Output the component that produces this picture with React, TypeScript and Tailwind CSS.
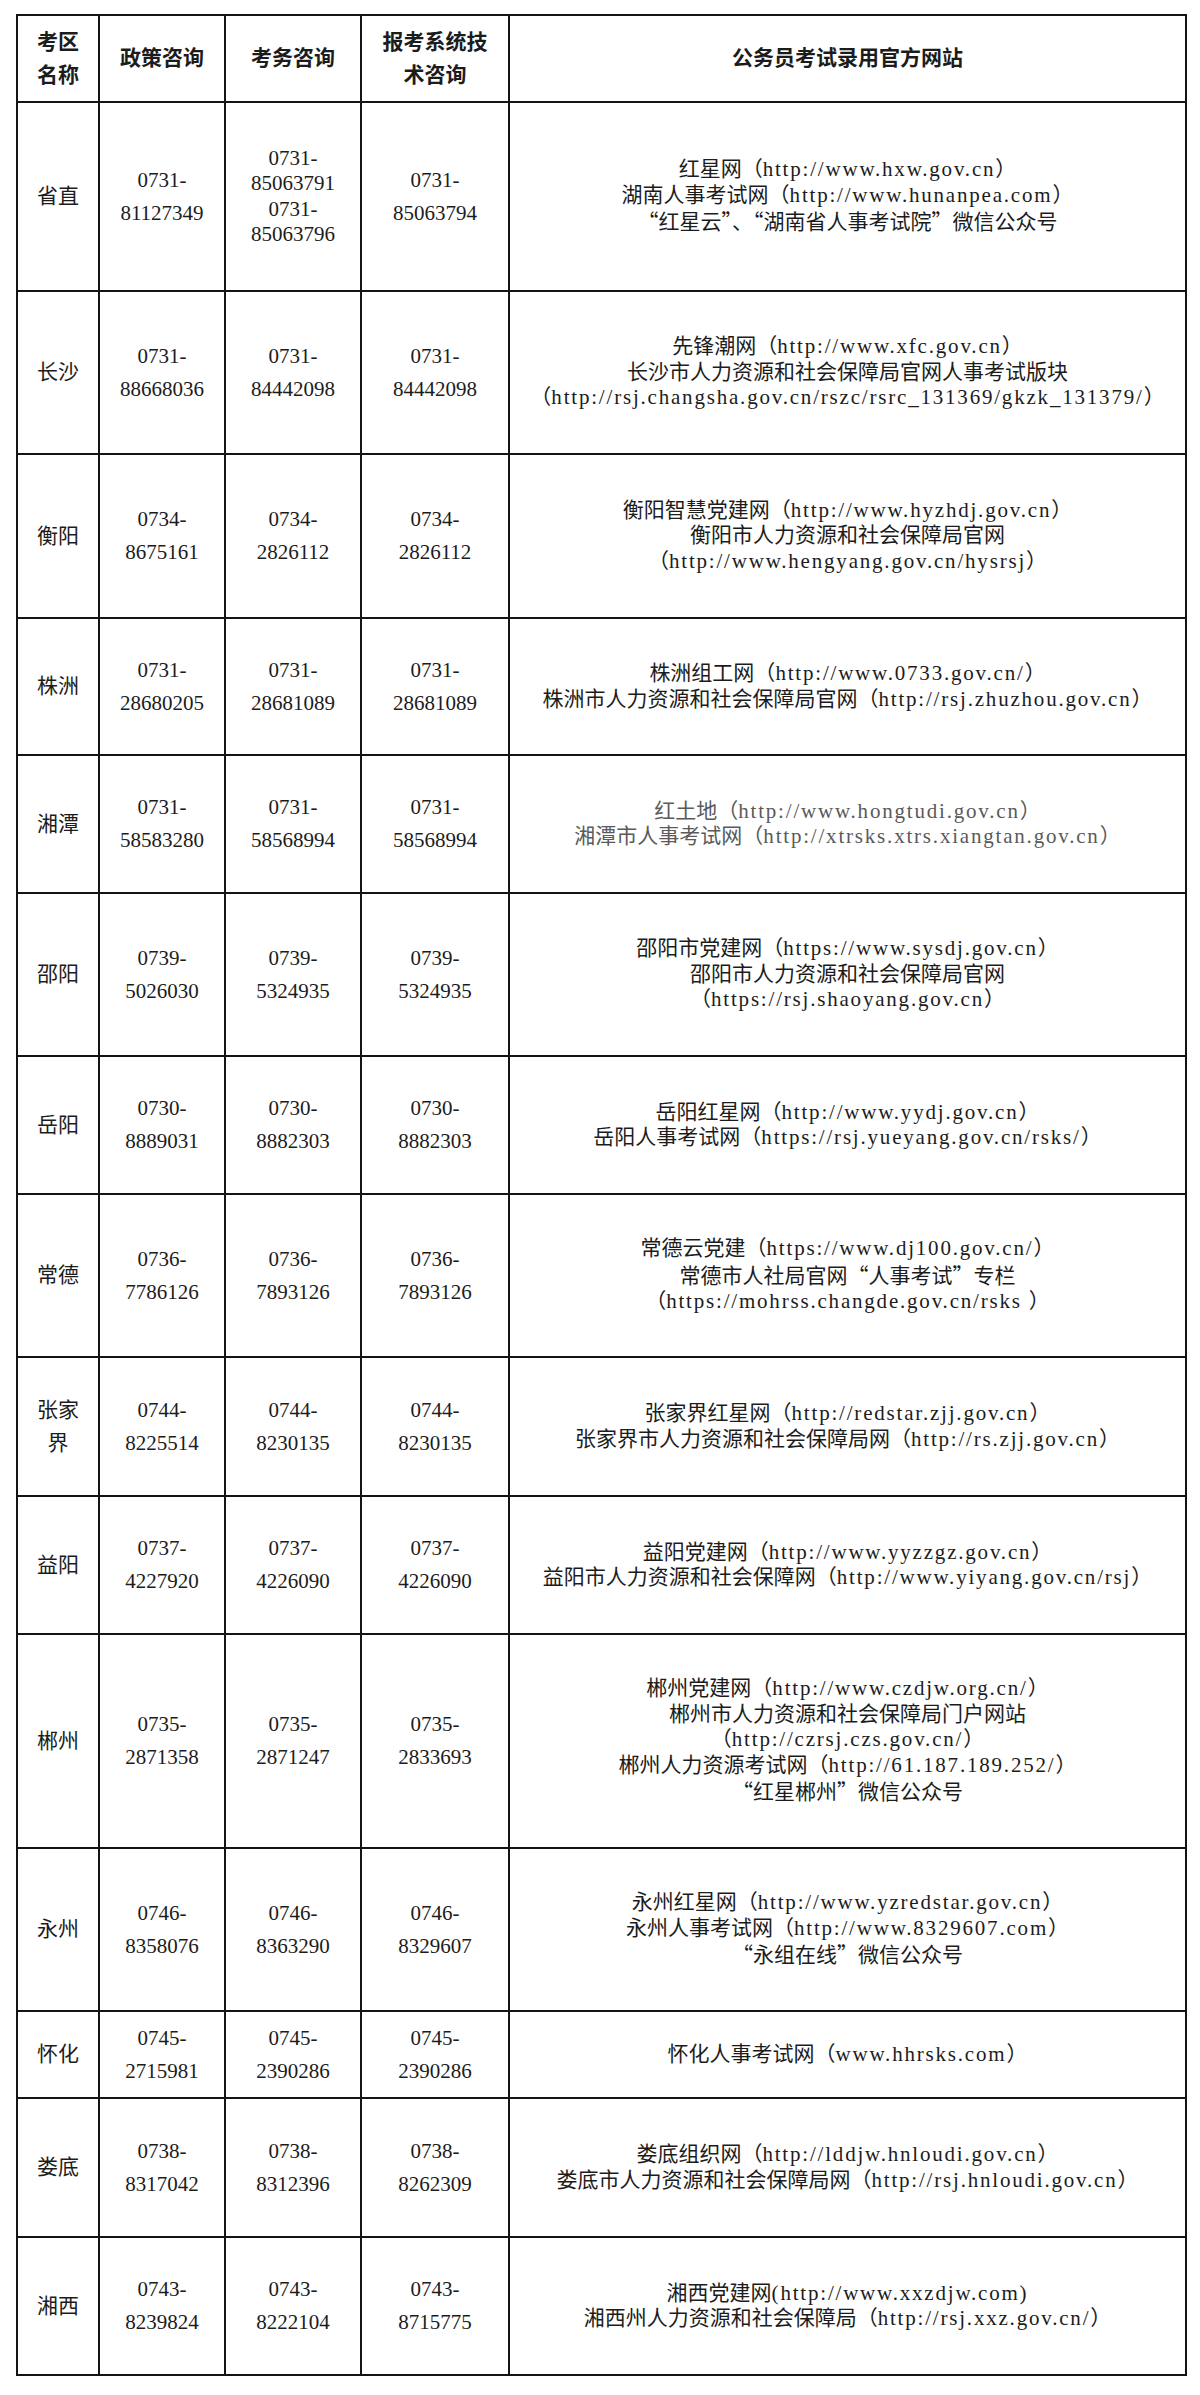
import React from "react";

type Row = {
  name: string[];
  a: string[];
  b: string[];
  c: string[];
  site: string[];
  gray?: boolean;
};

const rows: Row[] = [
  {
    name: ["省直"],
    a: ["0731-", "81127349"],
    b: ["0731-", "85063791", "0731-", "85063796"],
    c: ["0731-", "85063794"],
    site: [
      "红星网（http://www.hxw.gov.cn）",
      "湖南人事考试网（http://www.hunanpea.com）",
      "“红星云”、“湖南省人事考试院”微信公众号",
    ],
  },
  {
    name: ["长沙"],
    a: ["0731-", "88668036"],
    b: ["0731-", "84442098"],
    c: ["0731-", "84442098"],
    site: [
      "先锋潮网（http://www.xfc.gov.cn）",
      "长沙市人力资源和社会保障局官网人事考试版块",
      "（http://rsj.changsha.gov.cn/rszc/rsrc_131369/gkzk_131379/）",
    ],
  },
  {
    name: ["衡阳"],
    a: ["0734-", "8675161"],
    b: ["0734-", "2826112"],
    c: ["0734-", "2826112"],
    site: [
      "衡阳智慧党建网（http://www.hyzhdj.gov.cn）",
      "衡阳市人力资源和社会保障局官网",
      "（http://www.hengyang.gov.cn/hysrsj）",
    ],
  },
  {
    name: ["株洲"],
    a: ["0731-", "28680205"],
    b: ["0731-", "28681089"],
    c: ["0731-", "28681089"],
    site: [
      "株洲组工网（http://www.0733.gov.cn/）",
      "株洲市人力资源和社会保障局官网（http://rsj.zhuzhou.gov.cn）",
    ],
  },
  {
    name: ["湘潭"],
    a: ["0731-", "58583280"],
    b: ["0731-", "58568994"],
    c: ["0731-", "58568994"],
    site: [
      "红土地（http://www.hongtudi.gov.cn）",
      "湘潭市人事考试网（http://xtrsks.xtrs.xiangtan.gov.cn）",
    ],
    gray: true,
  },
  {
    name: ["邵阳"],
    a: ["0739-", "5026030"],
    b: ["0739-", "5324935"],
    c: ["0739-", "5324935"],
    site: [
      "邵阳市党建网（https://www.sysdj.gov.cn）",
      "邵阳市人力资源和社会保障局官网",
      "（https://rsj.shaoyang.gov.cn）",
    ],
  },
  {
    name: ["岳阳"],
    a: ["0730-", "8889031"],
    b: ["0730-", "8882303"],
    c: ["0730-", "8882303"],
    site: [
      "岳阳红星网（http://www.yydj.gov.cn）",
      "岳阳人事考试网（https://rsj.yueyang.gov.cn/rsks/）",
    ],
  },
  {
    name: ["常德"],
    a: ["0736-", "7786126"],
    b: ["0736-", "7893126"],
    c: ["0736-", "7893126"],
    site: [
      "常德云党建（https://www.dj100.gov.cn/）",
      "常德市人社局官网“人事考试”专栏",
      "（https://mohrss.changde.gov.cn/rsks ）",
    ],
  },
  {
    name: ["张家", "界"],
    a: ["0744-", "8225514"],
    b: ["0744-", "8230135"],
    c: ["0744-", "8230135"],
    site: [
      "张家界红星网（http://redstar.zjj.gov.cn）",
      "张家界市人力资源和社会保障局网（http://rs.zjj.gov.cn）",
    ],
  },
  {
    name: ["益阳"],
    a: ["0737-", "4227920"],
    b: ["0737-", "4226090"],
    c: ["0737-", "4226090"],
    site: [
      "益阳党建网（http://www.yyzzgz.gov.cn）",
      "益阳市人力资源和社会保障网（http://www.yiyang.gov.cn/rsj）",
    ],
  },
  {
    name: ["郴州"],
    a: ["0735-", "2871358"],
    b: ["0735-", "2871247"],
    c: ["0735-", "2833693"],
    site: [
      "郴州党建网（http://www.czdjw.org.cn/）",
      "郴州市人力资源和社会保障局门户网站",
      "（http://czrsj.czs.gov.cn/）",
      "郴州人力资源考试网（http://61.187.189.252/）",
      "“红星郴州”微信公众号",
    ],
  },
  {
    name: ["永州"],
    a: ["0746-", "8358076"],
    b: ["0746-", "8363290"],
    c: ["0746-", "8329607"],
    site: [
      "永州红星网（http://www.yzredstar.gov.cn）",
      "永州人事考试网（http://www.8329607.com）",
      "“永组在线”微信公众号",
    ],
  },
  {
    name: ["怀化"],
    a: ["0745-", "2715981"],
    b: ["0745-", "2390286"],
    c: ["0745-", "2390286"],
    site: ["怀化人事考试网（www.hhrsks.com）"],
  },
  {
    name: ["娄底"],
    a: ["0738-", "8317042"],
    b: ["0738-", "8312396"],
    c: ["0738-", "8262309"],
    site: [
      "娄底组织网（http://lddjw.hnloudi.gov.cn）",
      "娄底市人力资源和社会保障局网（http://rsj.hnloudi.gov.cn）",
    ],
  },
  {
    name: ["湘西"],
    a: ["0743-", "8239824"],
    b: ["0743-", "8222104"],
    c: ["0743-", "8715775"],
    site: [
      "湘西党建网(http://www.xxzdjw.com)",
      "湘西州人力资源和社会保障局（http://rsj.xxz.gov.cn/）",
    ],
  },
];

function Runs({ text }: { text: string }) {
  const parts = text.split(/([\x20-\x7E]+|[“”‘’]+)/).filter((p) => p.length > 0);
  return (
    <>
      {parts.map((p, i) => {
        if (/^[\x20-\x7E]+$/.test(p)) {
          return (
            <span key={i} className="tracking-[1.8px]">
              {p}
            </span>
          );
        }
        if (/^[“”‘’]+$/.test(p)) {
          return (
            <span key={i} className="font-['Noto_Sans_CJK_SC',sans-serif]">
              {p}
            </span>
          );
        }
        return <span key={i}>{p}</span>;
      })}
    </>
  );
}

function Cell({
  lines,
  tight,
  bold,
  gray,
  site,
}: {
  lines: string[];
  tight?: boolean;
  bold?: boolean;
  gray?: boolean;
  site?: boolean;
}) {
  return (
    <div
      className={
        "bg-white flex flex-col items-center justify-center text-center whitespace-nowrap " +
        (tight ? "leading-[25.5px] " : "leading-[33px] ") +
        (bold ? "font-bold " : "") +
        (gray ? "text-[#5a5a5a]" : "text-[#1c1c1c]")
      }
    >
      {lines.map((l, i) => (
        <div key={i}>{site ? <Runs text={l} /> : l}</div>
      ))}
    </div>
  );
}

export default function App() {
  return (
    <div className="bg-white w-[1200px] min-h-[2395px] pt-[14px] pl-[16px] font-['Liberation_Serif','Noto_Sans_CJK_SC',serif] text-[21px]">
      <div className="grid w-fit bg-[#141414] p-[2px] gap-[2px] grid-cols-[80px_124px_134px_146px_675px] grid-rows-[85px_187px_161px_162px_135px_136px_161px_136px_161px_137px_136px_212px_161px_85px_137px_136px]">
        <Cell lines={["考区", "名称"]} bold />
        <Cell lines={["政策咨询"]} bold />
        <Cell lines={["考务咨询"]} bold />
        <Cell lines={["报考系统技", "术咨询"]} bold />
        <Cell lines={["公务员考试录用官方网站"]} bold />
        {rows.map((r, i) => (
          <React.Fragment key={i}>
            <Cell lines={r.name} />
            <Cell lines={r.a} tight={r.a.length > 2} />
            <Cell lines={r.b} tight={r.b.length > 2} />
            <Cell lines={r.c} tight={r.c.length > 2} />
            <Cell lines={r.site} tight gray={r.gray} site />
          </React.Fragment>
        ))}
      </div>
    </div>
  );
}
